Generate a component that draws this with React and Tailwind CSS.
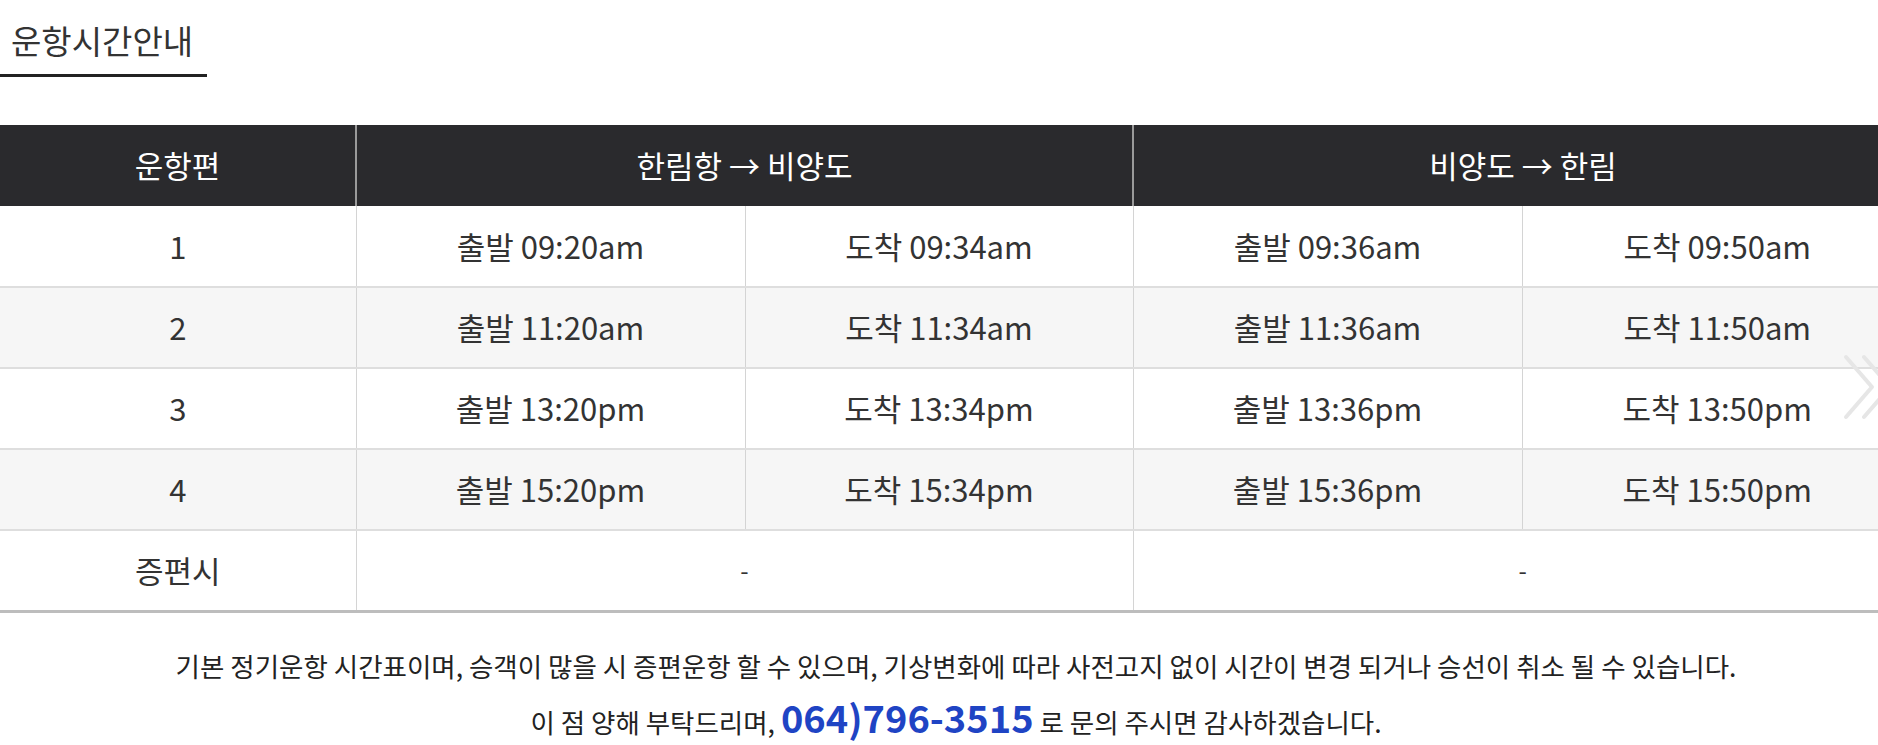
import React from "react";

const rows = [
  { no: "1", a: ["출발 09:20am", "도착 09:34am"], b: ["출발 09:36am", "도착 09:50am"] },
  { no: "2", a: ["출발 11:20am", "도착 11:34am"], b: ["출발 11:36am", "도착 11:50am"] },
  { no: "3", a: ["출발 13:20pm", "도착 13:34pm"], b: ["출발 13:36pm", "도착 13:50pm"] },
  { no: "4", a: ["출발 15:20pm", "도착 15:34pm"], b: ["출발 15:36pm", "도착 15:50pm"] },
];

const font = { fontFamily: '"Noto Sans CJK KR", "Noto Sans", sans-serif' };

const App = () => {
  return (
    <div className="relative w-full overflow-hidden bg-white text-[#333]" style={font}>
      <div className="w-[1912px]">
        {/* 타이틀 */}
        <div className="pt-[21px]">
          <h2 className="inline-block w-[207px] border-b-[3px] border-[#222] pl-[11px] pb-[15px] text-[33px] leading-[38px] font-normal text-[#333]">
            운항시간안내
          </h2>
        </div>

        {/* 시간표 */}
        <table className="mt-[48px] w-[1912px] table-fixed border-collapse text-center text-[31px]">
          <colgroup>
            <col className="w-[356px]" />
            <col className="w-[389px]" />
            <col className="w-[388px]" />
            <col className="w-[389px]" />
            <col className="w-[390px]" />
          </colgroup>
          <thead>
            <tr className="h-[81px] bg-[#2a2a2d] text-white">
              <th className="border-r-2 border-[#9a9a9a] font-normal">운항편</th>
              <th colSpan={2} className="border-r-2 border-[#9a9a9a] font-normal">
                한림항 → 비양도
              </th>
              <th colSpan={2} className="font-normal">
                비양도 → 한림
              </th>
            </tr>
          </thead>
          <tbody>
            {rows.map((r, i) => (
              <tr
                key={r.no}
                className={`h-[81px] border-b-2 border-[#dedede] ${i % 2 === 1 ? "bg-[#f6f6f6]" : "bg-white"}`}
              >
                <td className="border-r border-[#d4d4d4]">{r.no}</td>
                <td className="border-r border-[#d4d4d4]">{r.a[0]}</td>
                <td className="border-r border-[#d4d4d4]">{r.a[1]}</td>
                <td className="border-r border-[#d4d4d4]">{r.b[0]}</td>
                <td>{r.b[1]}</td>
              </tr>
            ))}
            <tr className="h-[81px] border-b-[3px] border-[#bdbdbd] bg-white">
              <td className="border-r border-[#d4d4d4]">증편시</td>
              <td colSpan={2} className="border-r border-[#d4d4d4] text-[24px]">-</td>
              <td colSpan={2} className="text-[24px]">-</td>
            </tr>
          </tbody>
        </table>

        {/* 안내문 */}
        <div className="flex flex-col items-center pt-[34px] pb-[6px] text-[26.5px] text-[#222]">
          <p className="leading-[38px]">
            기본 정기운항 시간표이며, 승객이 많을 시 증편운항 할 수 있으며, 기상변화에 따라 사전고지 없이 시간이 변경 되거나 승선이 취소 될 수 있습니다.
          </p>
          <p className="mt-[9px] flex items-baseline leading-[46px]">
            <span>이 점 양해 부탁드리며,&nbsp;</span>
            <span className="text-[38px] font-bold text-[#1f44c4]">064)796-3515</span>
            <span>&nbsp;로 문의 주시면 감사하겠습니다.</span>
          </p>
        </div>
      </div>

      {/* 스크롤 힌트 */}
      <svg
        className="absolute left-[1840px] top-[353px] h-[68px] w-[60px]"
        viewBox="0 0 60 68"
        fill="none"
        stroke="#e6e6e6"
        strokeWidth="4"
        strokeLinecap="round"
        strokeLinejoin="round"
      >
        <path d="M6 4 L32 34 L6 64" />
        <path d="M24 4 L50 34 L24 64" />
      </svg>
    </div>
  );
};

export default App;
